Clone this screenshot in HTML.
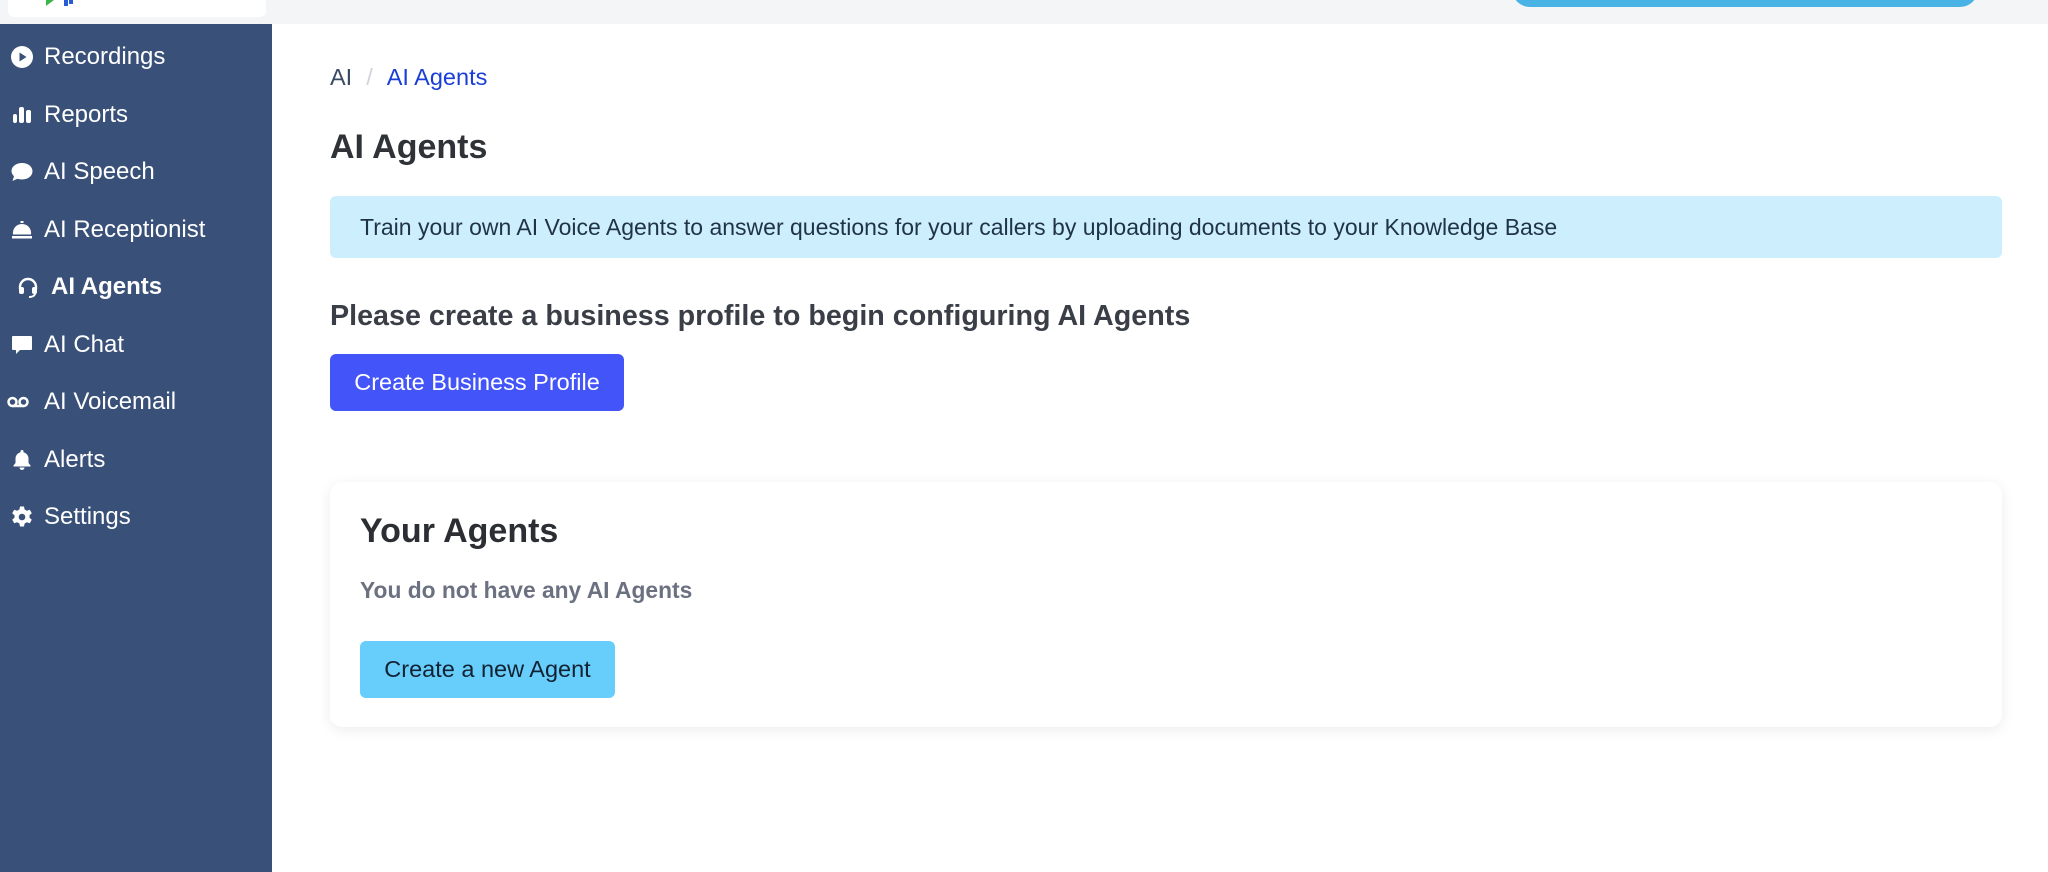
<!DOCTYPE html>
<html><head><meta charset="utf-8"><style>
*{box-sizing:border-box;margin:0;padding:0}
body{width:2048px;height:872px;overflow:hidden;background:#fff;font-family:"Liberation Sans",Arial,sans-serif;position:relative}
.top{position:absolute;left:0;top:0;width:2048px;height:24px;background:#f4f5f7}
.logo{position:absolute;left:8px;top:0;width:258px;height:17px;background:#fff;border-radius:0 0 6px 6px}
.pill{position:absolute;left:1512px;top:-30px;width:466px;height:37px;background:#4ab3e6;border-radius:18px}
.side{position:absolute;left:0;top:24px;width:272px;height:848px;background:#395079}
.item{position:absolute;left:0;height:30px;display:flex;align-items:center;color:#fff;font-size:24px}
.item svg{position:absolute;left:10px;width:24px;height:24px}
.item span{position:absolute;left:44px;white-space:nowrap}
.bc{position:absolute;left:330px;top:64px;font-size:23.5px;color:#3b4a63}
.bc .s{color:#d0d4da;margin:0 14px}
.bc .a{color:#1b3fd6}
h1{position:absolute;left:330px;top:128px;font-size:34px;color:#2f3237;font-weight:bold}
.alert{position:absolute;left:330px;top:196px;width:1672px;height:62px;background:#cdeefd;border-radius:6px;font-size:23px;color:#1f3345;padding:18px 0 0 30px;white-space:nowrap}
.h2{position:absolute;left:330px;top:300px;font-size:28.7px;font-weight:bold;color:#3a3e47;white-space:nowrap}
.btn1{position:absolute;left:330px;top:354px;width:294px;height:57px;background:#4354f8;border-radius:6px;color:#fff;font-size:23.5px;text-align:center;line-height:57px}
.card{position:absolute;left:330px;top:482px;width:1672px;height:245px;background:#fff;border-radius:12px;box-shadow:0 3px 14px rgba(0,0,0,0.08)}
.card .t{position:absolute;left:30px;top:30px;font-size:34px;font-weight:bold;color:#2b2e33}
.card .d{position:absolute;left:30px;top:95px;font-size:22.8px;font-weight:bold;color:#6b7180}
.btn2{position:absolute;left:30px;top:159px;width:255px;height:57px;background:#67cdfb;border-radius:6px;color:#112233;font-size:23.5px;text-align:center;line-height:57px}
</style></head><body>
<div class="top"><div class="logo"><svg width="60" height="17" style="position:absolute;left:28px;top:0"><path d="M10 0L18 0L10 6z" fill="#3bb54a"/><path d="M28 0h4v6h-4zM33 0h4v4h-4z" fill="#2a5bd7"/></svg></div><div class="pill"></div></div>
<div class="side">
<div class="item" style="top:18px"><svg viewBox="0 0 24 24"><circle cx="12" cy="12" r="11" fill="#fff"/><path d="M9.5 7.5v9l7-4.5z" fill="#395079"/></svg><span>Recordings</span></div>
<div class="item" style="top:76px"><svg viewBox="0 0 24 24"><rect x="3" y="11" width="4" height="9" rx="2" fill="#fff"/><rect x="9" y="4" width="5" height="16" rx="2" fill="#fff"/><rect x="16" y="7" width="5" height="13" rx="2" fill="#fff"/></svg><span>Reports</span></div>
<div class="item" style="top:133px"><svg viewBox="0 0 24 24"><path d="M12 3C6 3 1.5 6.5 1.5 11c0 2 1 3.8 2.5 5.2L2.5 21l5-2.2c1.4.5 2.9.7 4.5.7 6 0 10.5-3.6 10.5-8.2S18 3 12 3z" fill="#fff"/></svg><span>AI Speech</span></div>
<div class="item" style="top:191px"><svg viewBox="0 0 24 24"><path d="M2 18h20v2.5H2zM12 6a9 9 0 0 0-9 10.5h18A9 9 0 0 0 12 6zM10.5 3h3v2h-3z" fill="#fff"/></svg><span>AI Receptionist</span></div>
<div class="item" style="top:248px"><svg viewBox="0 0 24 24" style="left:16px"><path d="M4 14v-2a8 8 0 0 1 16 0v2" stroke="#fff" stroke-width="2.4" fill="none"/><rect x="3" y="12" width="5" height="7" rx="2" fill="#fff"/><rect x="16" y="12" width="5" height="7" rx="2" fill="#fff"/><path d="M19 18c0 3-3 4-6 4" stroke="#fff" stroke-width="2" fill="none"/></svg><span style="left:51px;font-weight:bold">AI Agents</span></div>
<div class="item" style="top:306px"><svg viewBox="0 0 24 24"><path d="M3 3h18a1 1 0 0 1 1 1v12a1 1 0 0 1-1 1H10l-4 4v-4H3a1 1 0 0 1-1-1V4a1 1 0 0 1 1-1z" fill="#fff"/></svg><span>AI Chat</span></div>
<div class="item" style="top:363px"><svg viewBox="0 0 24 24" style="left:4px;width:28px"><circle cx="6.5" cy="12" r="4" stroke="#fff" stroke-width="2.5" fill="none"/><circle cx="17.5" cy="12" r="4" stroke="#fff" stroke-width="2.5" fill="none"/><path d="M6.5 16h11" stroke="#fff" stroke-width="2.5"/></svg><span>AI Voicemail</span></div>
<div class="item" style="top:421px"><svg viewBox="0 0 24 24"><path d="M12 2a1.5 1.5 0 0 1 1.5 1.5v.7A6.5 6.5 0 0 1 18.5 10.5V15l2 2.5v1H3.5v-1l2-2.5v-4.5A6.5 6.5 0 0 1 10.5 4.2v-.7A1.5 1.5 0 0 1 12 2zM9.5 19.5h5a2.5 2.5 0 0 1-5 0z" fill="#fff"/></svg><span>Alerts</span></div>
<div class="item" style="top:478px"><svg viewBox="0 0 24 24"><path d="M10 1.5h4l.6 3 2.3 1.3 2.9-1 2 3.4-2.3 2v2.6l2.3 2-2 3.4-2.9-1-2.3 1.3-.6 3h-4l-.6-3-2.3-1.3-2.9 1-2-3.4 2.3-2v-2.6l-2.3-2 2-3.4 2.9 1 2.3-1.3z" fill="#fff"/><circle cx="12" cy="12" r="3.3" fill="#395079"/></svg><span>Settings</span></div>
</div>
<div class="bc">AI<span class="s">/</span><span class="a">AI Agents</span></div>
<h1>AI Agents</h1>
<div class="alert">Train your own AI Voice Agents to answer questions for your callers by uploading documents to your Knowledge Base</div>
<div class="h2">Please create a business profile to begin configuring AI Agents</div>
<div class="btn1">Create Business Profile</div>
<div class="card"><div class="t">Your Agents</div><div class="d">You do not have any AI Agents</div><div class="btn2">Create a new Agent</div></div>
</body></html>
